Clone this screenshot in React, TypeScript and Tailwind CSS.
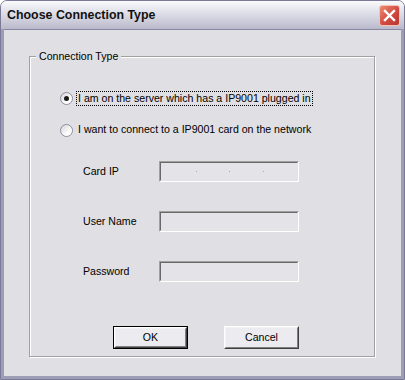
import React from "react";

const face = "bg-[#e0dfe3]";

function Radio({ checked }: { checked?: boolean }) {
  return (
    <span className="flex h-[13px] w-[13px] shrink-0 items-center justify-center rounded-full border border-[#8f8f9f] bg-[linear-gradient(135deg,#d6d6dc,#ffffff_70%)]">
      {checked && <span className="h-[5px] w-[5px] rounded-full bg-[#1a1a1a]" />}
    </span>
  );
}

function Field({ label, ip }: { label: string; ip?: boolean }) {
  return (
    <div className="flex items-center">
      <span className="w-[76px]">{label}</span>
      <div className="flex h-[21px] w-[140px] items-center border border-t-[#a0a0a0] border-l-[#a0a0a0] border-b-white border-r-white">
        <div className="flex h-full w-full items-center border border-t-[#696969] border-l-[#696969] border-b-[#e3e3e3] border-r-[#e3e3e3] bg-[#e4e3e7]">
          {ip && (
            <div className="flex w-full pl-[35px]">
              <span className="h-px w-px bg-[#a8a8a8]" />
              <span className="ml-[32px] h-px w-px bg-[#a8a8a8]" />
              <span className="ml-[33px] h-px w-px bg-[#a8a8a8]" />
            </div>
          )}
        </div>
      </div>
    </div>
  );
}

function Button({ children, def }: { children: React.ReactNode; def?: boolean }) {
  return (
    <div className={"h-[23px] w-[75px] " + (def ? "border border-black" : "")}>
      <div className="h-full w-full border border-t-white border-l-white border-b-[#404040] border-r-[#404040]">
        <div className="flex h-full w-full items-center justify-center border border-t-[#f2f2f2] border-l-[#f2f2f2] border-b-[#808080] border-r-[#808080] bg-[#ecebef]">
          {children}
        </div>
      </div>
    </div>
  );
}

export default function App() {
  return (
    <div className="h-[380px] w-[405px] bg-white">
      <div
        className={`flex h-[380px] w-[405px] flex-col overflow-hidden rounded-t-[7px] border border-[#7a7a98] ${face} text-[10.6px] text-black`}
        style={{ fontFamily: '"Liberation Sans", Arial, sans-serif' }}
      >
        <div className="flex h-[28px] shrink-0 items-center justify-between bg-[linear-gradient(#fbfbfd_0%,#e9e9f0_25%,#d4d4e0_60%,#b9b9cb_100%)] pl-[6px] pr-[4px]">
          <span className="text-[12.4px] font-bold text-[#111]">Choose Connection Type</span>
          <div className="flex h-[21px] w-[21px] items-center justify-center rounded-[3px] border border-[#f3c2b4] bg-[linear-gradient(135deg,#ec8c72,#d2493f_55%,#b8352f)]">
            <svg width="13" height="13" viewBox="0 0 13 13">
              <path d="M2 2 L11 11 M11 2 L2 11" stroke="white" strokeWidth="2.4" strokeLinecap="square" />
            </svg>
          </div>
        </div>
        <div className="flex flex-1 flex-col border-x-[3px] border-b-[3px] border-x-[#9d9db5] border-b-[#9d9db5] pl-[25px] pr-[26px] pt-[27px] pb-[19px] shadow-[inset_0_1px_0_#8888a4]">
          <div className="relative flex flex-1 flex-col border border-[#a0a0a0] pl-[30px] pt-[33px] shadow-[inset_1px_1px_0_#ffffff,1px_1px_0_#ffffff]">
            <span className={`absolute -top-[8px] left-[6px] ${face} px-[3px]`}>Connection Type</span>
            <div className="flex h-[16px] items-center">
              <Radio checked />
              <span className="ml-[3px] border border-dotted border-black px-[1px] leading-[13px]">
                I am on the server which has a IP9001 plugged in
              </span>
            </div>
            <div className="mt-[16px] flex h-[16px] items-center">
              <Radio />
              <span className="ml-[5px]">I want to connect to a IP9001 card on the network</span>
            </div>
            <div className="ml-[23px] mt-[23px] flex flex-col gap-[29px]">
              <Field label="Card IP" ip />
              <Field label="User Name" />
              <Field label="Password" />
            </div>
            <div className="ml-[53px] mt-[44px] flex gap-[36px]">
              <Button def>OK</Button>
              <Button>Cancel</Button>
            </div>
          </div>
        </div>
      </div>
    </div>
  );
}
